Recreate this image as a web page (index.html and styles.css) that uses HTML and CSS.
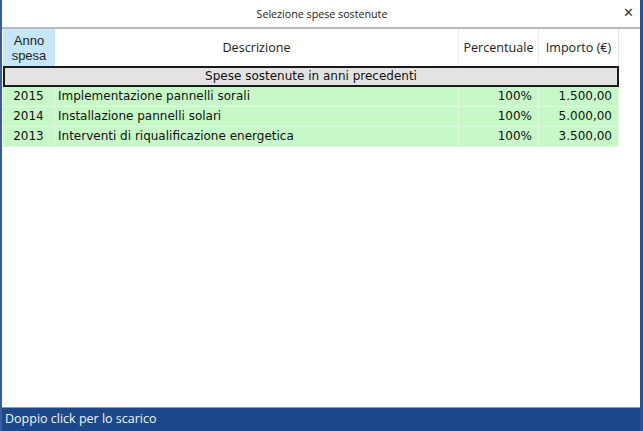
FILE: index.html
```html
<!DOCTYPE html>
<html>
<head>
<meta charset="utf-8">
<link rel="stylesheet" href="styles.css">
</head>
<body>
<div class="window">
  <div class="titlebar">
    <span class="title">Selezione spese sostenute</span>
    <span class="close">✕</span>
  </div>
  <div class="content">
    <div class="grid">
      <div class="row head">
        <div class="c c1 anno"><span class="ln">Anno</span><span class="ln">spesa</span></div>
        <div class="c c2 center">Descrizione</div>
        <div class="c c3 center">Percentuale</div>
        <div class="c c4 center">Importo (€)</div>
      </div>
      <div class="group">Spese sostenute in anni precedenti</div>
      <div class="row data">
        <div class="c c1 center">2015</div>
        <div class="c c2">Implementazione pannelli sorali</div>
        <div class="c c3 right">100%</div>
        <div class="c c4 right">1.500,00</div>
      </div>
      <div class="row data">
        <div class="c c1 center">2014</div>
        <div class="c c2">Installazione pannelli solari</div>
        <div class="c c3 right">100%</div>
        <div class="c c4 right">5.000,00</div>
      </div>
      <div class="row data">
        <div class="c c1 center">2013</div>
        <div class="c c2">Interventi di riqualificazione energetica</div>
        <div class="c c3 right">100%</div>
        <div class="c c4 right">3.500,00</div>
      </div>
    </div>
  </div>
  <div class="status">Doppio click per lo scarico</div>
</div>
</body>
</html>
```
FILE: styles.css
```css
html, body {
  margin: 0;
  padding: 0;
  background: #ffffff;
}
.window {
  width: 643px;
  height: 431px;
  box-sizing: border-box;
  border-left: 2px solid #3a5c9c;
  border-right: 3px solid #2c4f8f;
  display: flex;
  flex-direction: column;
  background: #ffffff;
  font-family: "DejaVu Sans", Verdana, sans-serif;
}
.titlebar {
  height: 27px;
  flex: none;
  border-bottom: 2px solid #b9b9b9;
  display: flex;
  align-items: center;
  justify-content: center;
  position: relative;
  font-family: "Open Sans", "Noto Sans", sans-serif;
  font-size: 10.7px;
  color: #222;
}
.title {
  margin-left: 2px;
}
.close {
  position: absolute;
  right: 6px;
  top: 5px;
  font-size: 13px;
  font-weight: bold;
  color: #333;
  font-family: "DejaVu Sans", sans-serif;
}
.content {
  flex: 1;
  border-bottom: 1px solid #9a9a9a;
  padding-left: 1px;
}
.grid {
  width: 616px;
}
.row {
  display: grid;
  grid-template-columns: 52px 404px 80px 80px;
}
.head {
  height: 37px;
  font-family: "Open Sans", "Noto Sans", sans-serif;
  font-size: 12.6px;
  color: #222;
}
.head .c {
  display: flex;
  align-items: center;
  justify-content: center;
  border-right: 1px solid #ececec;
  line-height: 15px;
}
.head .anno {
  background: #c6e7f9;
  flex-direction: column;
  border-right: none;
  font-family: "Liberation Sans", Arial, sans-serif;
  font-size: 13px;
}
.ln {
  display: block;
  line-height: 15px;
}
.head .c4 {
  border-right: 1px solid #e4e4e4;
}
.group {
  height: 17px;
  border: 2px solid #1a1a1a;
  background: #e3e3e3;
  text-align: center;
  font-size: 12px;
  line-height: 17px;
  color: #111;
  width: 612px;
}
.data {
  height: 20px;
  background: #c7f8c7;
  font-size: 12px;
  color: #111;
  border-bottom: 1px solid #e2f5e2;
  box-sizing: border-box;
}
.data .c {
  line-height: 19px;
  border-right: 1px solid #e2f5e2;
  white-space: nowrap;
}
.data .c2 {
  padding-left: 3px;
}
.data .right {
  text-align: right;
  padding-right: 6px;
}
.data .center {
  text-align: center;
}
.status {
  height: 23px;
  flex: none;
  background: #1d4889;
  color: #f0f4fa;
  font-family: "Open Sans", "Noto Sans", sans-serif;
  font-size: 12.5px;
  line-height: 22px;
  padding-left: 3px;
}
```
